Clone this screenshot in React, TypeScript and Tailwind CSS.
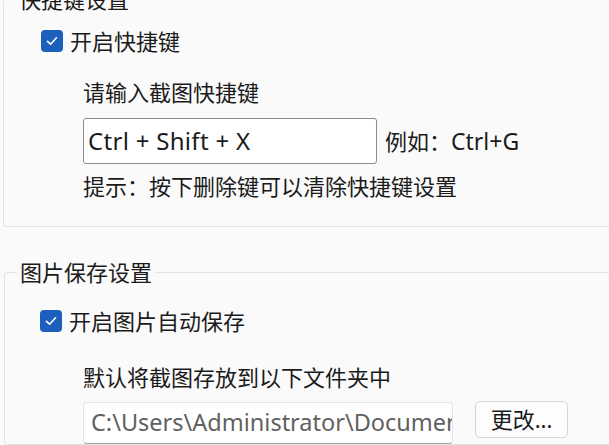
import React from "react";

function CheckBox({ label }: { label: string }) {
  return (
    <label className="flex h-[30px] items-center gap-[7px]">
      <span className="flex h-[22px] w-[22px] items-center justify-center rounded-[4px] bg-[#1d5fbd]">
        <svg width="14" height="14" viewBox="0 0 14 14" fill="none">
          <path d="M2.5 7.3 5.6 10.2 11.5 3.8" stroke="#fff" strokeWidth="1.6" strokeLinecap="round" strokeLinejoin="round" />
        </svg>
      </span>
      <span>{label}</span>
    </label>
  );
}

function Group({
  title,
  className,
  children,
}: {
  title: string;
  className?: string;
  children: React.ReactNode;
}) {
  return (
    <fieldset className={`w-[660px] rounded-[3px] border border-[#e3e3e3] p-0 ${className ?? ""}`}>
      <legend className="ml-[12px] px-[3px] leading-[30px]">{title}</legend>
      {children}
    </fieldset>
  );
}

export default function App() {
  return (
    <div
      className="h-[445px] w-[609px] overflow-hidden bg-[#fafafa] pl-[3px] text-[22px] text-[#1b1b1b]"
      style={{ fontFamily: '"Noto Sans", "Noto Sans CJK SC", sans-serif' }}
    >
      <Group title="快捷键设置" className="-mt-[16px]">
        <div className="pb-[25px] pl-[37px]">
          <div className="mt-[12px]">
            <CheckBox label="开启快捷键" />
          </div>
          <div className="pl-[42px]">
            <p className="mt-[21px] leading-[30px]">请输入截图快捷键</p>
            <div className="mt-[11px] flex items-center gap-[8px]">
              <div className="flex h-[46px] w-[294px] items-center rounded-[3px] border border-[#8c8c8c] bg-white pl-[4px] text-[24px] tracking-[0.3px]">
                Ctrl + Shift + X
              </div>
              <span>
                例如：<span className="text-[23px]">Ctrl+G</span>
              </span>
            </div>
            <p className="mt-[7px] leading-[30px]">提示：按下删除键可以清除快捷键设置</p>
          </div>
        </div>
      </Group>

      <Group title="图片保存设置" className="ml-[1px] mt-[30px]">
        <div className="pl-[35px]">
          <div className="mt-[19px]">
            <CheckBox label="开启图片自动保存" />
          </div>
          <div className="pl-[43px]">
            <p className="mt-[26px] leading-[30px]">默认将截图存放到以下文件夹中</p>
            <div className="mt-[10px] flex items-start gap-[22px]">
              <div className="flex h-[42px] w-[370px] items-center overflow-hidden whitespace-nowrap rounded-[4px] border border-[#e5e5e5] border-b-[#a0a0a0] bg-white pl-[7px] text-[23.5px] text-[#616161]">
                C:\Users\Administrator\Documents
              </div>
              <button
                type="button"
                className="-mt-[1px] h-[37px] w-[93px] rounded-[5px] border border-[#d4d4d4] bg-[#fdfdfd] text-[#1b1b1b]"
              >
                更改...
              </button>
            </div>
          </div>
        </div>
      </Group>
    </div>
  );
}
